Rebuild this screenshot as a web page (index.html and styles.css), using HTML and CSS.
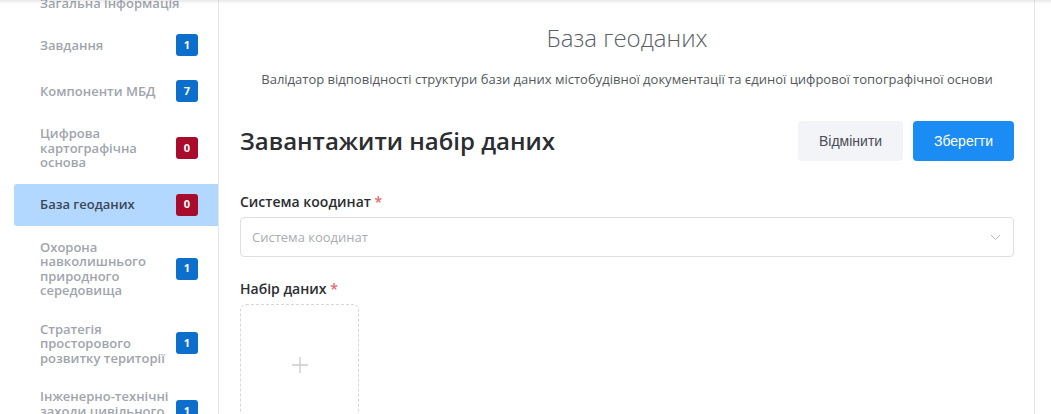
FILE: index.html
```html
<!DOCTYPE html>
<html lang="uk">
<head>
<meta charset="utf-8">
<title>База геоданих</title>
<link rel="stylesheet" href="styles.css">
</head>
<body>
<div class="topshade"></div>
<div class="page">
  <aside class="sidebar">
    <ul class="menu">
      <li class="item"><span class="label">Загальна інформація</span></li>
      <li class="item"><span class="label">Завдання</span><span class="badge blue">1</span></li>
      <li class="item"><span class="label">Компоненти МБД</span><span class="badge blue">7</span></li>
      <li class="item"><span class="label">Цифрова картографічна основа</span><span class="badge red">0</span></li>
      <li class="item active"><span class="label">База геоданих</span><span class="badge red">0</span></li>
      <li class="item"><span class="label">Охорона навколишнього природного середовища</span><span class="badge blue">1</span></li>
      <li class="item"><span class="label">Стратегія просторового розвитку території</span><span class="badge blue">1</span></li>
      <li class="item"><span class="label">Інженерно-технічні заходи цивільного захисту</span><span class="badge blue">1</span></li>
    </ul>
  </aside>
  <main class="main">
    <h1 class="title">База геоданих</h1>
    <p class="subtitle">Валідатор відповідності структури бази даних містобудівної документації та єдиної цифрової топографічної основи</p>
    <div class="head-row">
      <h2 class="heading">Завантажити набір даних</h2>
      <div class="actions">
        <button class="btn btn-cancel" type="button">Відмінити</button>
        <button class="btn btn-save" type="button">Зберегти</button>
      </div>
    </div>
    <div class="field">
      <label class="field-label">Система коодинат <span class="req">*</span></label>
      <div class="select">
        <span class="placeholder">Система коодинат</span>
        <svg class="chevron" width="11" height="7" viewBox="0 0 11 7"><polyline points="1,1 5.5,5.5 10,1" fill="none" stroke="#b4b7bd" stroke-width="1"/></svg>
      </div>
    </div>
    <div class="field field-upload">
      <label class="field-label">Набір даних <span class="req">*</span></label>
      <div class="upload">
        <svg width="18" height="18" viewBox="0 0 18 18"><path d="M9 1V17M1 9H17" stroke="#c9ccd1" stroke-width="1.3" fill="none"/></svg>
      </div>
    </div>
  </main>
  <div class="rightgap"></div>
</div>
</body>
</html>
```
FILE: styles.css
```css
* { box-sizing: border-box; }
html, body { margin: 0; padding: 0; background: #fff; }
body {
  width: 1051px;
  height: 414px;
  overflow: hidden;
  font-family: "Open Sans", "Noto Sans", sans-serif;
  position: relative;
}
.topshade {
  position: absolute;
  left: 0; right: 0; top: 0;
  height: 4px;
  background: linear-gradient(to bottom, rgba(0,0,0,0.09), rgba(0,0,0,0));
  z-index: 5;
}
.page {
  display: flex;
  height: 414px;
}
.sidebar {
  width: 219px;
  flex: none;
  border-right: 1px solid #e4e6ea;
  padding-left: 14px;
  overflow: hidden;
}
.menu {
  list-style: none;
  margin: -14.5px 0 0 0;
  padding: 0;
  display: flex;
  flex-direction: column;
  gap: 4px;
}
.item {
  display: flex;
  align-items: center;
  justify-content: space-between;
  gap: 6px;
  min-height: 34px;
  padding: 10px 20px 10px 26px;
  font-size: 13px;
  font-weight: 600;
  line-height: 14.5px;
  color: #a0a5ad;
  border-radius: 3px 0 0 3px;
}
.item .label { flex: 1; }
.item.active { background: #b3d8ff; color: #3b4756; }
.badge {
  flex: none;
  width: 22px;
  height: 22px;
  border-radius: 3px;
  color: #fff;
  font-size: 11px;
  font-weight: 700;
  display: flex;
  align-items: center;
  justify-content: center;
}
.badge.blue { background: #0b6fcb; }
.badge.red { background: #a90b2d; }

.main {
  width: 816px;
  flex: none;
  border-right: 1px solid #e4e6ea;
  padding: 22px 20px 0 21px;
  overflow: hidden;
}
.title {
  margin: 0;
  text-align: center;
  font-size: 24px;
  font-weight: 300;
  line-height: 32px;
  color: #5c5f66;
}
.subtitle {
  margin: 16px 0 0 0;
  text-align: center;
  font-size: 13px;
  line-height: 18px;
  color: #55585e;
}
.head-row {
  margin-top: 33px;
  display: flex;
  align-items: center;
  justify-content: space-between;
  height: 40px;
}
.heading {
  margin: 0;
  font-size: 24px;
  font-weight: 600;
  color: #2b2d31;
  line-height: 30px;
}
.actions { display: flex; gap: 10px; }
.btn {
  height: 40px;
  padding: 0 21px;
  border: none;
  border-radius: 4px;
  font-family: "Liberation Sans", Arial, sans-serif;
  font-size: 14px;
}
.btn-cancel { background: #f3f4f8; color: #4a4d55; width: 105px; }
.btn-save { background: #1b8cf3; color: #fff; width: 101px; }

.field { margin-top: 31px; display: flex; flex-direction: column; gap: 5px; }
.field-upload { margin-top: 22px; }
.field-label {
  font-size: 14px;
  font-weight: 600;
  line-height: 20px;
  color: #2b2d31;
}
.req { color: #e36b6b; }
.select {
  height: 40px;
  border: 1px solid #dcdfe6;
  border-radius: 4px;
  display: flex;
  align-items: center;
  justify-content: space-between;
  padding: 0 12px 0 11px;
}
.placeholder { font-size: 13px; color: #a9acb2; }
.chevron { display: block; }
.upload {
  width: 119px;
  height: 122px;
  border: 1px dashed #d6d8dc;
  border-radius: 6px;
  display: flex;
  align-items: center;
  justify-content: center;
}
.rightgap { flex: 1; }
```
